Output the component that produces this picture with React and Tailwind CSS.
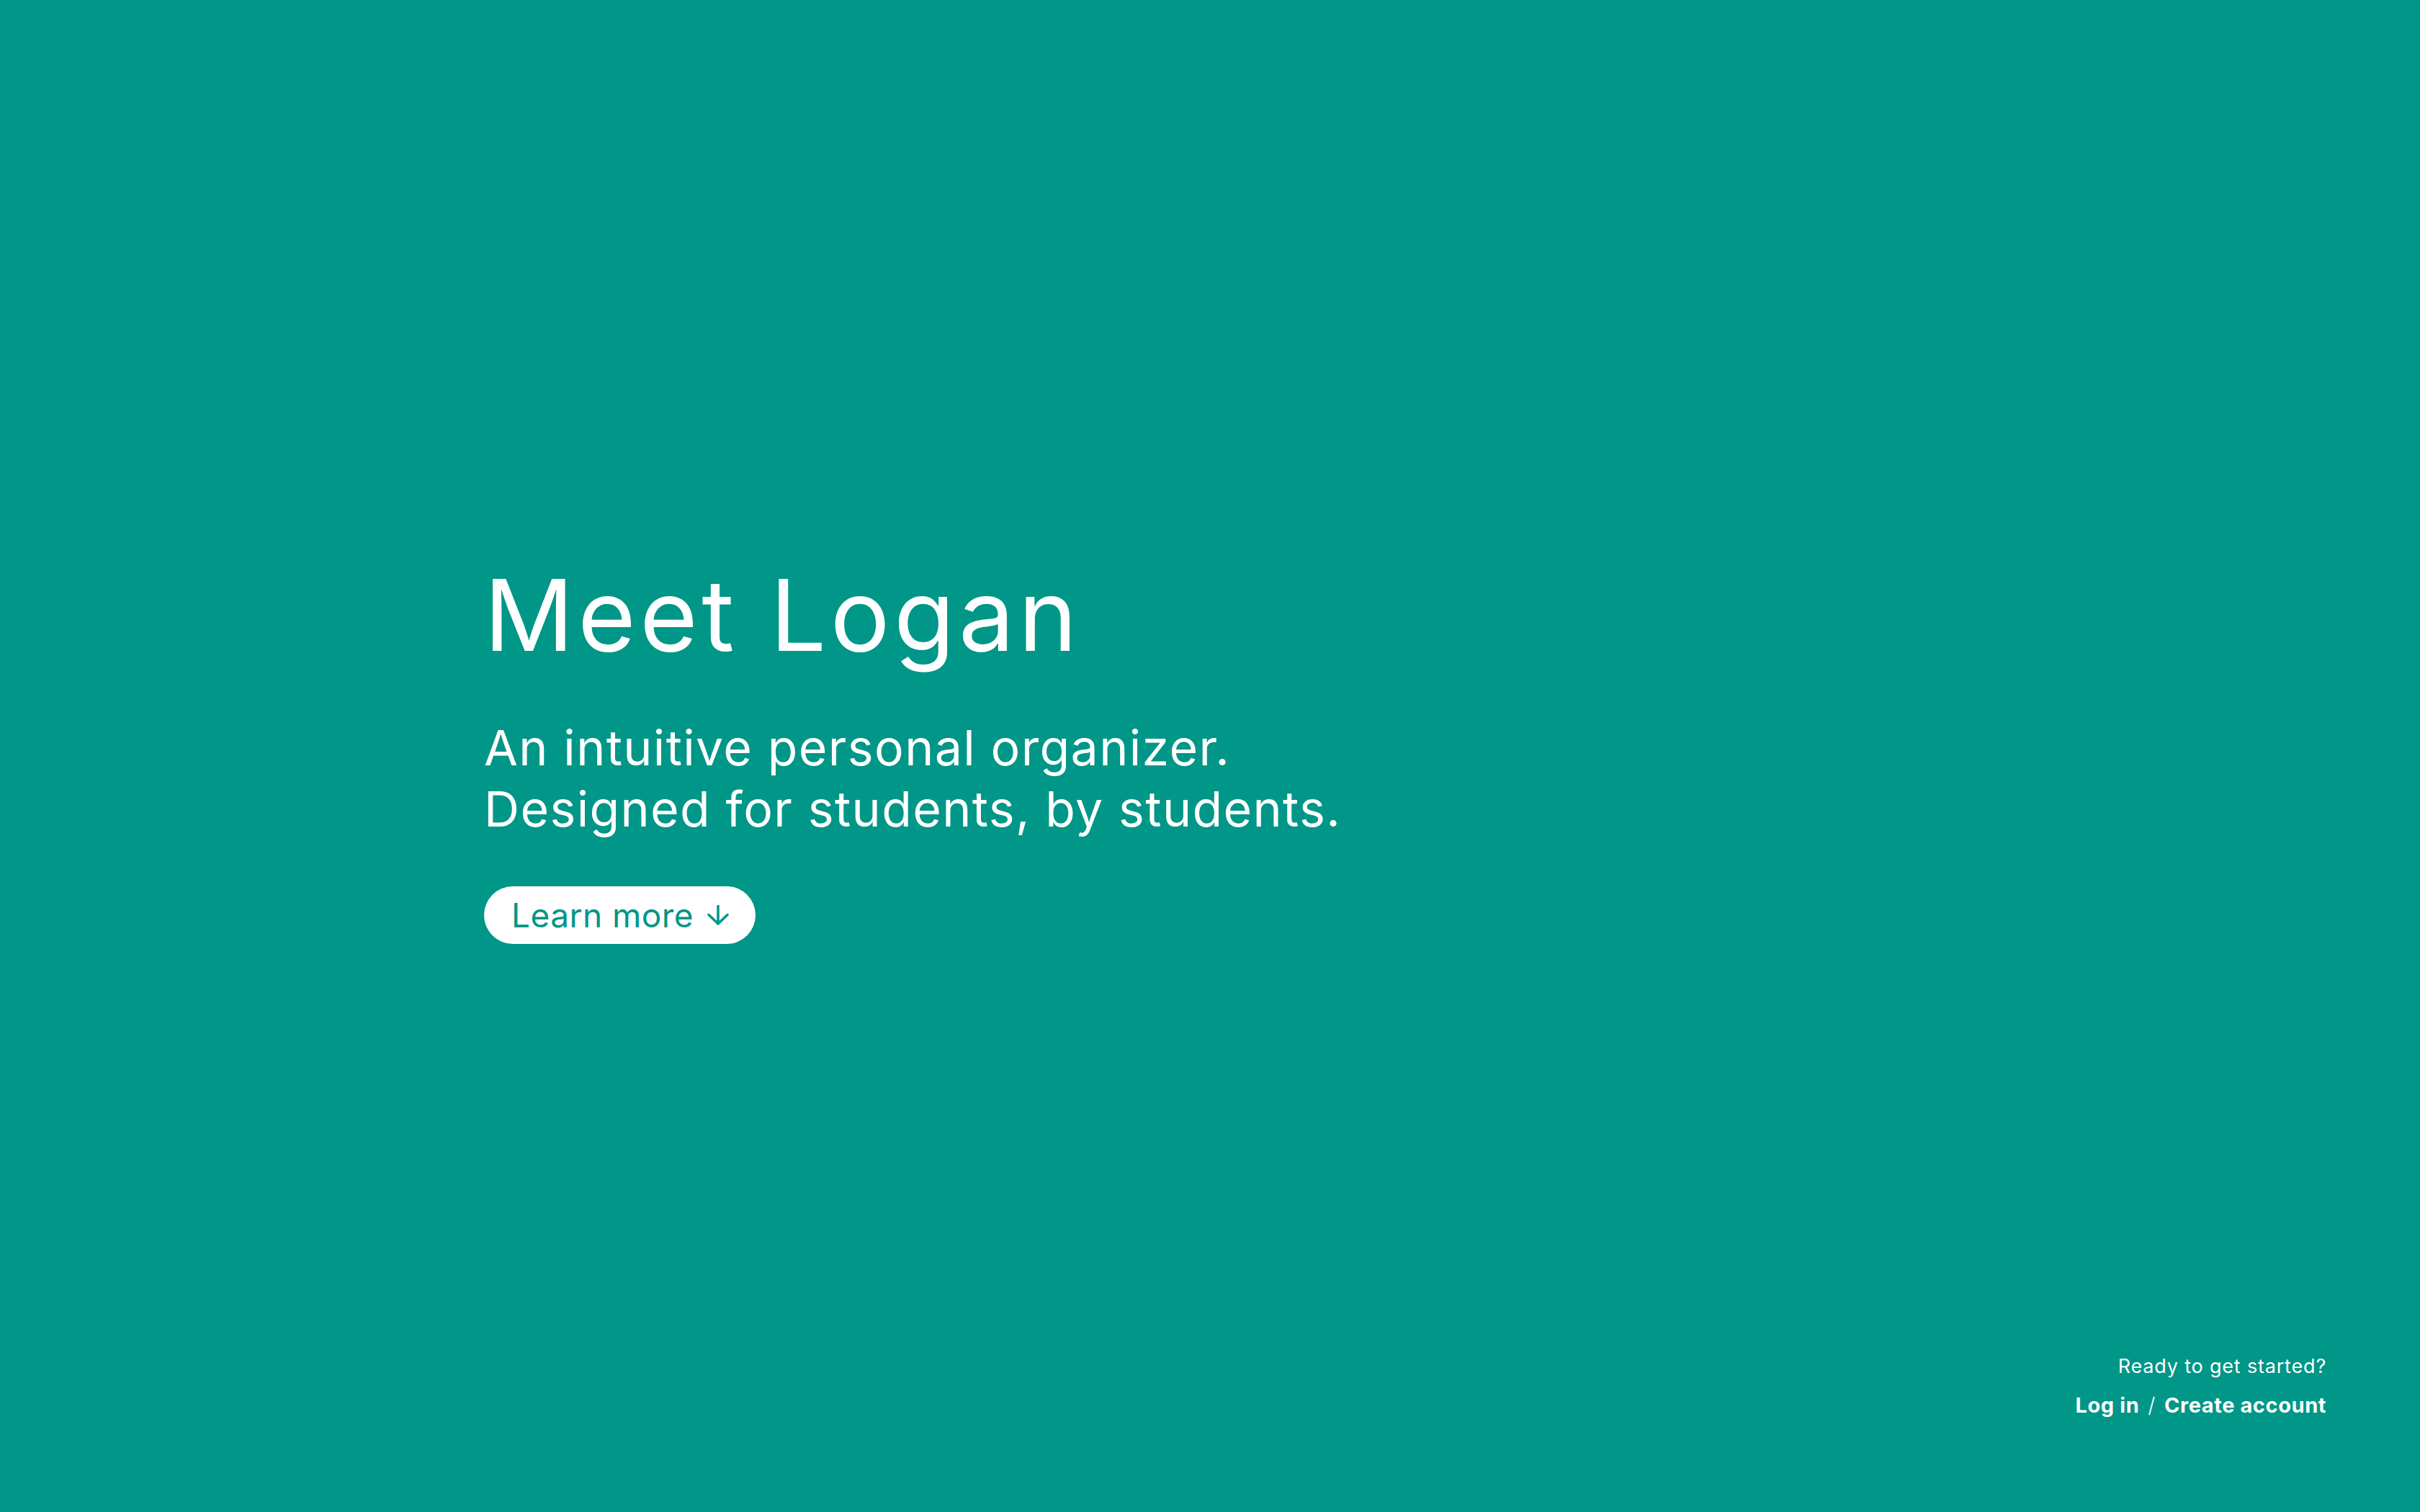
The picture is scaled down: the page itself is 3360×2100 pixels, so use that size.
export default function App() {
  return (
    <div className="h-screen w-full bg-[#009688] text-white grid grid-rows-[1fr_auto_1fr]">
      <div />

      {/* hero */}
      <div className="pl-[20%] pb-[14px]">
        <h1 className="font-['Inter',sans-serif] font-normal text-[138px] leading-[1.15] tracking-[0.04em]">
          Meet Logan
        </h1>
        <p className="mt-[63px] font-['Inter',sans-serif] text-[68px] leading-[85px] tracking-[0.02em]">
          An intuitive personal organizer.
          <br />
          Designed for students, by students.
        </p>
        <button className="mt-[65px] h-[80px] pl-[38px] pr-[36px] rounded-full bg-white text-[#009688] flex items-center gap-[18px] font-['Inter',sans-serif] text-[46px] tracking-[0.01em]">
          <span>Learn more</span>
          <svg width="32" height="28" viewBox="0 0 32 28" fill="none" stroke="currentColor" strokeWidth="3.5" strokeLinecap="round" strokeLinejoin="round">
            <path d="M16 1.5v24.5" />
            <path d="M3 13.5l13 12.5 13-12.5" />
          </svg>
        </button>
      </div>

      {/* footer */}
      <div className="self-end justify-self-end pr-[130px] pb-[130px] text-right font-['Inter',sans-serif]">
        <p className="text-[27px] leading-[36px] tracking-[0.03em]">Ready to get started?</p>
        <p className="mt-[18px] text-[29px] leading-[36px] tracking-[0.02em]">
          <a href="#" className="font-bold">Log in</a>
          <span className="mx-[12px] font-light">/</span>
          <a href="#" className="font-bold">Create account</a>
        </p>
      </div>
    </div>
  );
}
